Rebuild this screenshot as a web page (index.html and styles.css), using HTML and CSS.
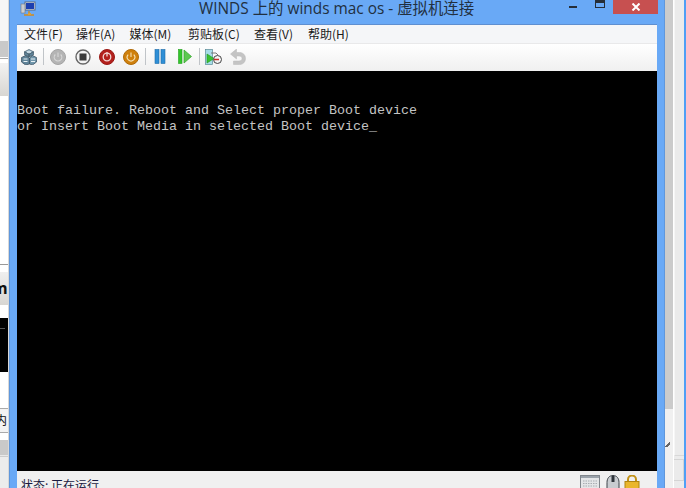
FILE: index.html
```html
<!DOCTYPE html>
<html lang="zh">
<head>
<meta charset="utf-8">
<title>WINDS 上的 winds mac os - 虚拟机连接</title>
<link rel="stylesheet" href="styles.css">
</head>
<body>
<div class="desktop">
  <aside class="bg-left">
    <div class="l a1"></div>
    <div class="l a2"></div>
    <div class="l a3"></div>
    <div class="l a4"></div>
    <div class="l a5"></div>
    <div class="l a6"></div>
    <div class="l a7"></div>
    <div class="l a8"></div>
    <div class="l a9"><span class="clip-m">m</span></div>
    <div class="l a10"></div>
    <div class="l a11"><div class="dim"></div></div>
    <div class="l a12"></div>
    <div class="l a13"><span class="clip-n">内</span></div>
    <div class="l a14"></div>
    <div class="l a15"></div>
    <div class="l a16"></div>
  </aside>

  <main class="window">
    <header class="titlebar">
      <svg class="appicon" width="16" height="16" viewBox="0 0 16 16">
        <rect x="5" y="1" width="10" height="8" fill="#e8eef8" stroke="#5c6a80"/>
        <rect x="6" y="2" width="8" height="6" fill="#1c3fb0"/>
        <rect x="1" y="3" width="4" height="9" fill="#c8ccd2" stroke="#70767e" stroke-width=".6"/>
        <path d="M9 10v3M4 14h10" stroke="#d08a20" stroke-width="1.4"/>
        <rect x="8" y="12" width="3" height="2" fill="#e0a030"/>
      </svg>
      <h1 class="title">WINDS 上的 winds mac os - 虚拟机连接</h1>
      <div class="controls">
        <span class="min"></span>
        <span class="max"></span>
        <span class="close">
          <svg width="10" height="8" viewBox="0 0 10 8"><path d="M1.5 0.5 8.5 7.5M8.5 0.5 1.5 7.5" stroke="#fff" stroke-width="2"/></svg>
        </span>
      </div>
    </header>

    <div class="client">
      <nav class="menu">
        <span>文件(F)</span><span>操作(A)</span><span>媒体(M)</span><span>剪贴板(C)</span><span>查看(V)</span><span>帮助(H)</span>
      </nav>
      <div class="toolbar">
        <span class="btn"><svg width="16" height="16" viewBox="0 0 16 16">
          <path d="M8 0.500 12.500 2.800 8 5.200 3.500 2.800z" fill="#a8c4d4" stroke="#3e5666" stroke-width=".7"/>
          <path d="M3.500 2.800 8 5.200V8L3.500 5.800zM12.500 2.800 8 5.200V8l4.500-2.200z" fill="#5f8398" stroke="#3e5666" stroke-width=".7"/>
          <path d="M4.500 6.500 8.500 9v6L4.500 16 .5 13V8.500z" fill="#5f8398" stroke="#34495a" stroke-width=".7"/>
          <path d="M11.500 6.500 15.500 8.500V13l-4 3-3-1V9z" fill="#6f95aa" stroke="#34495a" stroke-width=".7"/>
          <path d="M6 3h4M2.500 10h4M2.500 12.500h4M10 10h4M10 12.500h4" stroke="#e8f0f4" stroke-width="1.100"/>
        </svg></span>
        <span class="sep"></span>
        <span class="btn"><svg width="16" height="16" viewBox="0 0 16 16">
          <circle cx="8" cy="8" r="7.500" fill="#b4b4b4" stroke="#a4a4a4"/>
          <path d="M5.300 5.500a3.800 3.800 0 1 0 5.400 0" fill="none" stroke="#d8d8d8" stroke-width="1.100"/>
          <path d="M8 3.500v4.500" stroke="#d8d8d8" stroke-width="1.100"/>
        </svg></span>
        <span class="btn"><svg width="16" height="16" viewBox="0 0 16 16">
          <circle cx="8" cy="8" r="7" fill="#f4f4f4" stroke="#666" stroke-width="1.400"/>
          <rect x="4.500" y="4.500" width="7" height="7" fill="#3a3a3a"/>
        </svg></span>
        <span class="btn"><svg width="16" height="16" viewBox="0 0 16 16">
          <circle cx="8" cy="8" r="7.500" fill="#b3201c" stroke="#9a1a16"/>
          <circle cx="8" cy="8" r="3.800" fill="none" stroke="#f3d6d4" stroke-width="1.300"/>
          <path d="M8 3v4.500" stroke="#f3d6d4" stroke-width="1.300"/>
        </svg></span>
        <span class="btn"><svg width="16" height="16" viewBox="0 0 16 16">
          <circle cx="8" cy="8" r="7.500" fill="#cf800c" stroke="#b06a08"/>
          <path d="M5.200 5.600a3.800 3.800 0 1 0 5.600 0" fill="none" stroke="#f6e2b8" stroke-width="1.100"/>
          <path d="M8 3.500v4.500" stroke="#f6e2b8" stroke-width="1.100"/>
        </svg></span>
        <span class="sep"></span>
        <span class="btn"><svg width="12" height="15" viewBox="0 0 12 15">
          <rect x="1" y="0.500" width="4" height="14" fill="#2f8fd6" stroke="#1c6ba8" stroke-width=".6"/>
          <rect x="7" y="0.500" width="4" height="14" fill="#2f8fd6" stroke="#1c6ba8" stroke-width=".6"/>
        </svg></span>
        <span class="btn"><svg width="14" height="15" viewBox="0 0 14 15">
          <rect x="0.500" y="0.500" width="3.500" height="14" fill="#33c52a" stroke="#24a01e" stroke-width=".6"/>
          <path d="M6 1 13.500 7.500 6 14z" fill="#5dc850" stroke="#2ea326" stroke-width=".7"/>
        </svg></span>
        <span class="sep"></span>
        <span class="btn"><svg width="17" height="16" viewBox="0 0 17 16">
          <rect x="0.500" y="0.500" width="7" height="15" fill="#a8dce8" stroke="#5a8a96" stroke-width=".7"/>
          <path d="M2 5 9 9.500 2 14z" fill="#3cc032" stroke="#239a1c" stroke-width=".6"/>
          <circle cx="12.500" cy="10.500" r="4" fill="#f4f4f4" stroke="#444"/>
          <path d="M9 10.500h5" stroke="#c8302a" stroke-width="1.500"/>
          <path d="M6 4h5l2 2" fill="none" stroke="#777"/>
        </svg></span>
        <span class="btn"><svg width="16" height="16" viewBox="0 0 16 16">
          <path d="M6.500 0 0.500 5l6 5V7h2.500c2 0 3 1 3 2.500S11 12 9 12H3.500v3.500H9.500c3.600 0 6-2.600 6-6s-2.400-6-6-6h-3z" fill="#c4c4c4" stroke="#b8b8b8" stroke-width=".5"/>
        </svg></span>
      </div>
      <pre class="screen">Boot failure. Reboot and Select proper Boot device
or Insert Boot Media in selected Boot device<span class="cursor">_</span></pre>
      <footer class="status">
        <span class="status-text">状态: 正在运行</span>
        <div class="tray">
          <svg width="20" height="13" viewBox="0 0 20 13">
            <rect x="0.500" y="0.500" width="19" height="14" fill="#e4e6e8" stroke="#80868c"/>
            <rect x="1" y="1" width="18" height="2" fill="#9aa2aa"/>
            <path d="M3 6h14M3 8.500h14M3 11h14" stroke="#a8adb2" stroke-dasharray="1.500 1"/>
          </svg>
          <svg width="14" height="13" viewBox="0 0 14 13">
            <path d="M7 0.500c4 0 6 3 6 7v6H1v-6c0-4 2-7 6-7z" fill="#c8ccd0" stroke="#3c4248"/>
            <rect x="5.500" y="1" width="3" height="6" fill="#30363c"/>
          </svg>
          <svg class="lock" width="16" height="13" viewBox="0 0 16 13">
            <path d="M4 7V4.500a4 4 0 0 1 8 0V7" fill="none" stroke="#c29218" stroke-width="2"/>
            <rect x="1" y="6.500" width="14" height="8" fill="#eab62c" stroke="#b08512"/>
          </svg>
        </div>
      </footer>
    </div>
  </main>

  <aside class="bg-right">
    <div class="r-col r-track"><div class="r-thumb"></div><div class="r-rest"><span class="r-grip"></span></div></div>
    <div class="r-col r-panel"><div class="r-panel-top"></div><div class="r-box"></div></div>
    <div class="r-edge"></div>
  </aside>
</div>
</body>
</html>
```

FILE: styles.css
```css
* { box-sizing: border-box; }
html, body { margin: 0; padding: 0; }
body { background: #fff; font-family: "Noto Sans", "Noto Sans CJK SC", sans-serif; }

.desktop { display: flex; width: 686px; height: 488px; overflow: hidden; }

/* background application, left of the VM window */
.bg-left { width: 9px; flex: none; display: flex; flex-direction: column; overflow: hidden; background: #fff; border-right: 1px solid #d8d8d8; }
.l { flex: none; overflow: hidden; }
.a1 { height: 41px; background: #f6f6f6; }
.a2 { height: 16px; background: #c9c9c9; }
.a3 { height: 1px; background: #fff; }
.a4 { height: 1px; background: #aaa; }
.a5 { height: 4px; background: #fff; }
.a6 { height: 33px; background: linear-gradient(#f2f2f2, #d8d6d2); }
.a7 { height: 168px; background: #fff; }
.a8 { height: 8px; background: #fff; border-top: 1px solid #999; }
.a9 { height: 33px; background: linear-gradient(#efefef, #d8d6d2); }
.clip-m { display: block; margin: 6px 0 0 -8px; font: 700 16px/20px "Noto Sans", sans-serif; color: #111; }
.a10 { height: 13px; background: #fff; }
.a11 { height: 54px; background: #000; padding-top: 10px; }
.dim { width: 5px; height: 1px; background: #555; }
.a12 { height: 36px; background: #fff; }
.a13 { height: 25px; background: #f3f3f3; border-top: 1px solid #aaa; border-bottom: 1px solid #aaa; }
.clip-n { display: block; margin: 3px 0 0 -5px; font: 400 12px/16px "Noto Sans CJK SC", sans-serif; color: #111; }
.a14 { height: 7px; background: #fff; }
.a15 { height: 16px; background: #c9c9c9; border-bottom: 1px solid #e8e8e8; }
.a16 { height: 46px; background: #ececec; border-top: 1px solid #ccc; }

/* VM window */
.window { width: 656px; flex: none; display: flex; flex-direction: column; background: #69a9f6; border-right: 1px solid #5f97dc; border-left: 1px solid #5f97dc; padding: 0 7px; }
.titlebar { height: 24px; flex: none; display: flex; margin: 0 -7px; position: relative; }
.appicon { margin: 1px 0 0 10px; flex: none; }
.title { margin: 0 0 0 163px; font: 400 15.400px/18px "Open Sans", "Noto Sans CJK SC", sans-serif; color: #22303f; white-space: nowrap; }
.controls { position: absolute; top: 0; left: 559px; display: flex; }
.min { width: 8px; height: 2px; margin-top: 6px; background: #262e38; }
.max { width: 10px; height: 8px; margin-left: 18px; border: 1px solid #262e38; border-top-width: 3px; }
.close { width: 45px; height: 14px; margin-left: 8px; background: #c75050; display: flex; justify-content: center; align-items: center; }

.client { flex: 1; min-height: 0; display: flex; flex-direction: column; border-top: 1px solid #5f8fd0; background: #f0f0f0; }
.menu { height: 18px; flex: none; display: grid; grid-template-columns: 52px 53.500px 58.500px 66px 54px auto; background: #f5f6f8; padding-left: 7px; font: 400 12px/17px "Noto Sans CJK SC", sans-serif; color: #1a1a1a; }
.toolbar { height: 28px; flex: none; display: flex; align-items: center; padding-bottom: 2px; border-top: 1px solid #e9e9ea; background: linear-gradient(#fff, #f0f0f0); }
.btn { width: 24.250px; height: 24px; flex: none; display: flex; align-items: center; justify-content: center; }
.sep { width: 5px; height: 17px; flex: none; background: linear-gradient(#c0c4c8, #c0c4c8) center / 1px 100% no-repeat; }
.screen { flex: none; height: 400px; margin: 0; background: #000; color: #c4c4c4; padding: 32px 0 0; font: 400 13.333px/16px "Liberation Mono", monospace; }
.cursor { color: #d0d0d0; }
.status { flex: 1; min-height: 0; display: flex; justify-content: space-between; overflow: hidden; background: #f0f0f0; padding: 4px 17px 0 4px; }
.status-text { padding-top: 1px; font: 400 12px/17px "Noto Sans CJK SC", sans-serif; color: #1a1a40; white-space: nowrap; }
.tray { display: flex; gap: 6px; align-items: flex-start; }
.tray svg { overflow: hidden; }
.tray .lock { margin-left: -2px; }

/* background application, right of the VM window */
.bg-right { width: 21px; flex: none; display: flex; background: #f0f0f0; }
.r-col { flex: none; }
.r-track { width: 8px; display: flex; flex-direction: column; }
.r-thumb { height: 409px; flex: none; background: #cbcbcb; }
.r-rest { flex: 1; background: #f0f0f0; padding-top: 33px; }
.r-grip { display: block; width: 5px; height: 5px; background: linear-gradient(135deg, transparent 40%, #666 40%, #666 70%, transparent 70%); }
.r-panel { width: 11px; display: flex; flex-direction: column; background: #ebebeb; border-left: 1px solid #fff; }
.r-panel-top { height: 456px; flex: none; border-left: 1px solid #f6f6f6; border-bottom: 1px solid #d8d8d8; }
.r-box { height: 22px; margin: 3px 0 0 0; border: 1px solid #d4d4d4; border-left: none; }
.r-edge { width: 2px; flex: none; background: #4f9ff5; }
```
